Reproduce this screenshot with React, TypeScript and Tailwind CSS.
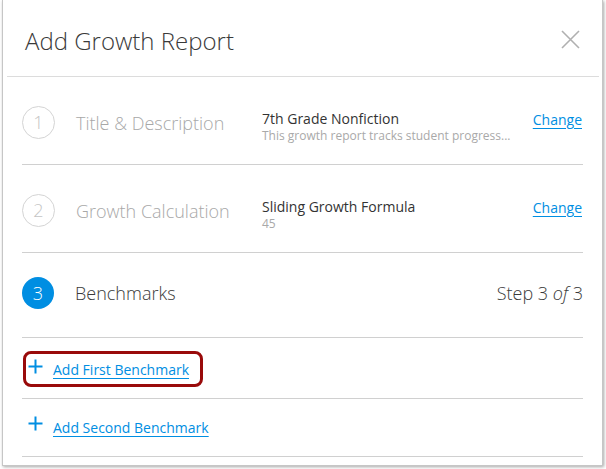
import React from "react";

const font = { fontFamily: '"Open Sans", "Liberation Sans", sans-serif' };

function Plus() {
  return (
    <svg width="15" height="15" viewBox="0 0 15 15" className="shrink-0 -mt-[8px]">
      <path d="M7.5 0.5 V14.5 M0.5 7.5 H14.5" stroke="#008ee2" strokeWidth="2" fill="none" />
    </svg>
  );
}

function Circle({ n, active }: { n: string; active?: boolean }) {
  return active ? (
    <div className="w-[32px] h-[32px] rounded-full bg-[#008ee2] flex items-center justify-center text-white text-[18px] font-light shrink-0">
      {n}
    </div>
  ) : (
    <div className="w-[33px] h-[33px] rounded-full border border-[#d4d4d4] flex items-center justify-center text-[#c4c4c4] text-[18px] font-light shrink-0">
      {n}
    </div>
  );
}

function DoneRow({ n, label, title, sub, cls }: { n: string; label: string; title: string; sub: string; cls: string }) {
  return (
    <div className={`flex items-center border-b border-[#d0d0d0] ${cls}`}>
      <Circle n={n} />
      <div className="ml-[21px] w-[186px] text-[18px] font-light text-[#a8a8a8] leading-[24px]">{label}</div>
      <div className="flex-1 flex flex-col mt-[8px]">
        <div className="text-[14px] text-[#333] leading-[18px]">{title}</div>
        <div className="text-[12px] text-[#a9a9a9] leading-[16px]">{sub}</div>
      </div>
      <a className="text-[14px] text-[#008ee2] underline underline-offset-[3px] leading-[18px] -mt-[6px] mr-[1px]" href="#">
        Change
      </a>
    </div>
  );
}

export default function App() {
  return (
    <div className="w-[606px] h-[469px] bg-white overflow-hidden" style={font}>
      <div className="ml-[2px] w-[601px] h-[466px] border-x border-b border-[#c6c6c6] bg-white shadow-[1px_1px_3px_rgba(0,0,0,0.35)]">
        <div className="ml-[4px] mr-[3px] h-[77px] border-b border-[#dcdcdc] flex items-center justify-between pl-[18px] pr-[19px] pt-[6px]">
          <div className="text-[24px] font-light text-[#3a3a3a] leading-[32px]">Add Growth Report</div>
          <svg width="19" height="19" viewBox="0 0 19 19" className="-mt-[4px]">
            <path d="M1 1 L18 18 M18 1 L1 18" stroke="#b0b0b0" strokeWidth="1.6" fill="none" />
          </svg>
        </div>
        <div className="mx-[19px]">
          <DoneRow
            n="1"
            label="Title & Description"
            title="7th Grade Nonfiction"
            sub="This growth report tracks student progress..."
            cls="h-[88px] pt-[4px]"
          />
          <DoneRow
            n="2"
            label="Growth Calculation"
            title="Sliding Growth Formula"
            sub="45"
            cls="h-[88px] pt-[4px]"
          />
          <div className="flex items-center border-b border-[#d0d0d0] h-[85px] pb-[4px]">
            <Circle n="3" active />
            <div className="ml-[21px] flex-1 text-[18px] font-light text-[#3a3a3a] leading-[24px]">Benchmarks</div>
            <div className="text-[18px] font-light text-[#3a3a3a] leading-[24px]">
              Step 3 <span className="italic">of</span> 3
            </div>
          </div>
          <div className="relative flex items-center border-b border-[#d0d0d0] h-[61px] pl-[6px] pt-[4px]">
            <Plus />
            <a href="#" className="ml-[10px] text-[14px] text-[#008ee2] underline underline-offset-[3px] leading-[18px]">
              Add First Benchmark
            </a>
            <div className="absolute left-[1px] top-[13px] w-[180px] h-[36px] border-[3px] border-[#990a0a] rounded-[8px]" />
          </div>
          <div className="flex items-center border-b border-[#d0d0d0] h-[58px] pl-[6px] pt-0">
            <Plus />
            <a href="#" className="ml-[10px] text-[14px] text-[#008ee2] underline underline-offset-[3px] leading-[18px]">
              Add Second Benchmark
            </a>
          </div>
        </div>
      </div>
    </div>
  );
}
